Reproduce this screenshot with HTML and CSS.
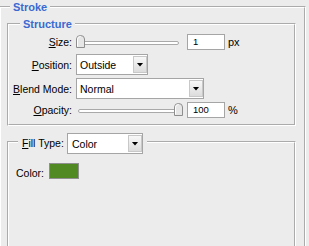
FILE: index.html
```html
<!DOCTYPE html>
<html lang="en">
<head>
<meta charset="UTF-8">
<title>Layer Style - Stroke</title>
<link rel="stylesheet" href="styles.css">
</head>
<body>

<fieldset class="group outer">
  <legend>Stroke</legend>

  <fieldset class="group structure">
    <legend>Structure</legend>

    <div class="row r-size">
      <span class="lbl"><u>S</u>ize:</span>
      <div class="slider">
        <div class="track"></div>
        <svg class="thumb" style="left:0px" width="9" height="13" viewBox="0 0 9 13"><path d="M0.5 12.5V4Q0.5 0.5 4.5 0.5Q8.5 0.5 8.5 4V12.5Z" fill="#e6e6e6" stroke="#8e8e8e"/><path d="M1.5 11.5V4.2Q1.5 1.5 4.5 1.5" fill="none" stroke="#fff"/></svg>
      </div>
      <div class="field">1</div>
      <span class="unit">px</span>
    </div>

    <div class="row r-pos">
      <span class="lbl"><u>P</u>osition:</span>
      <div class="select sel-pos">
        <span class="val">Outside</span>
        <span class="btn"></span>
      </div>
    </div>

    <div class="row r-blend">
      <span class="lbl"><u>B</u>lend Mode:</span>
      <div class="select sel-blend">
        <span class="val">Normal</span>
        <span class="btn"></span>
      </div>
    </div>

    <div class="row r-opacity">
      <span class="lbl"><u>O</u>pacity:</span>
      <div class="slider">
        <div class="track"></div>
        <svg class="thumb" style="left:98px" width="9" height="13" viewBox="0 0 9 13"><path d="M0.5 12.5V4Q0.5 0.5 4.5 0.5Q8.5 0.5 8.5 4V12.5Z" fill="#e6e6e6" stroke="#8e8e8e"/><path d="M1.5 11.5V4.2Q1.5 1.5 4.5 1.5" fill="none" stroke="#fff"/></svg>
      </div>
      <div class="field">100</div>
      <span class="unit">%</span>
    </div>
  </fieldset>

  <fieldset class="group fill">
    <legend>
      <span class="fill-lbl"><u>F</u>ill Type:</span>
      <div class="select sel-fill">
        <span class="val">Color</span>
        <span class="btn"></span>
      </div>
    </legend>

    <div class="color-row">
      <span class="color-lbl">Color:</span>
      <div class="swatch"></div>
    </div>
  </fieldset>
</fieldset>

</body>
</html>
```

FILE: styles.css
```css
html, body { margin:0; padding:0; height:100%; overflow:hidden; }
body { background:#ececec; font-family:"Liberation Sans", Arial, sans-serif; font-size:10.5px; color:#000; }
u { text-decoration:underline; text-underline-offset:1px; }

/* etched group boxes */
.group { border:2px groove #fff; margin:0; padding:0; min-width:0; }
.group > legend { font-weight:bold; font-size:11px; line-height:14px; color:#3a69d2; padding:0 3px; }

.outer { margin:0 3px 0 -1px; padding:3px 8px 0 6px; }
.outer > legend { margin-left:3px; }

.structure { padding:3px 0 6px; }
.structure > legend { margin-left:11px; }

/* rows */
.row { display:flex; align-items:center; }
.row .lbl { width:63px; margin-right:4px; text-align:right; }
.r-size { height:16px; }
.r-pos { height:21px; margin-top:4px; }
.r-blend { height:21px; margin-top:3px; }
.r-opacity { height:16px; margin-top:3px; }

/* slider */
.slider { position:relative; width:108px; height:16px; }
.slider .track { position:absolute; left:2px; right:5px; top:7px; height:4px; box-sizing:border-box; border:1px solid #a9a9a9; border-radius:2px; background:#fff; }
.slider .thumb { position:absolute; top:1px; display:block; }

/* text field */
.field { width:38px; height:16px; box-sizing:border-box; margin-left:3px; padding-left:5px; border:1px solid #a5a5a5; background:#fff; font-size:9.5px; line-height:14px; }
.unit { margin-left:3px; font-size:11px; }

/* dropdown */
.select { display:flex; align-items:center; height:21px; box-sizing:border-box; padding:1px 0 1px 3px; border:1px solid #a5a5a5; background:#fff; font-size:10.5px; font-weight:normal; color:#000; }
.select .val { flex:1; }
.select .btn { display:flex; align-items:center; justify-content:center; width:14px; height:17px; box-sizing:border-box; border:1px solid #c8c8c8; background:linear-gradient(#f8f8f8, #dcdcdc); }
.select .btn::after { content:""; width:7px; height:4px; background:#000; clip-path:polygon(0 0, 100% 0, 50% 100%); }
.sel-pos { width:72px; }
.sel-blend { width:128px; }
.sel-fill { width:76px; padding-left:4px; }

/* fill type */
.fill { margin-top:4px; padding:9px 0 120px 7px; }
.fill > legend { display:flex; align-items:center; margin-left:2px; padding:3px 4px 0; font-weight:normal; color:#000; line-height:normal; font-size:10.5px; }
.fill-lbl { width:45px; margin-bottom:2px; }

.color-row { display:flex; align-items:center; height:16px; }
.color-lbl { margin-right:5px; margin-top:3px; }
.swatch { width:30px; height:16px; box-sizing:border-box; border:1px solid #8f8f8f; background:#518a22; }
```
